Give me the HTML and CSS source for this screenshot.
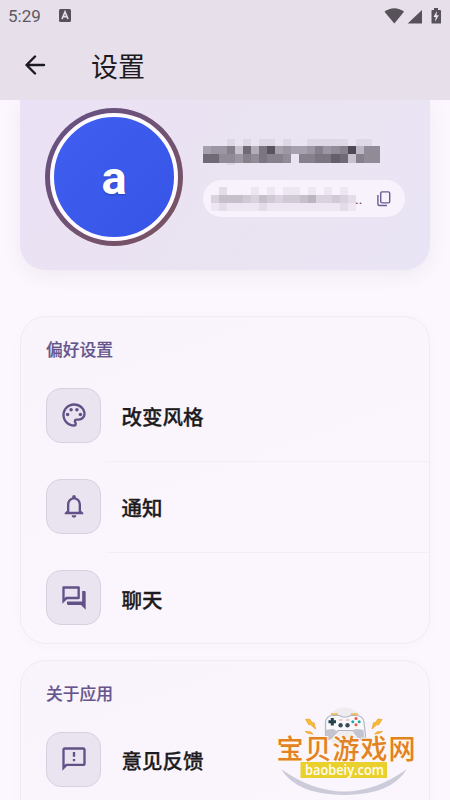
FILE: index.html
```html
<!DOCTYPE html>
<html lang="zh-CN">
<head>
<meta charset="utf-8">
<title>设置</title>
<link rel="stylesheet" href="styles.css">
</head>
<body>
<div class="screen">
  <header class="header">
    <div class="status">
      <span class="clock">5:29</span>
      <svg class="badge" width="12" height="13" viewBox="0 0 12 13"><rect width="12" height="13" rx="1.5" fill="#57525a"/><path d="M3 10 6 2.8 9 10M4.2 7.6h3.6" fill="none" stroke="#e7e0eb" stroke-width="1.6"/></svg>
      <svg class="signals" width="58" height="18" viewBox="0 0 58 18"><g fill="#57525a"><path d="M.5 4.8C6-.1 14.500-.1 20 4.800L10.300 16.500z"/><path d="M38 3v13.500H23.700z"/><path d="M48 3h2V1h4v2h2q1 0 1 1v12q0 .5-.5.500h-8.500q-.5 0-.5-.5V4q0-1 .5-1z"/></g><path d="m52.800 4-3.300 6h2.200l-.7 4.800 3.800-6.500h-2.300z" fill="#eee7f1"/></svg>
    </div>
    <div class="bar">
      <svg width="22" height="22" viewBox="0 0 22 22" fill="none" stroke="#1c1a20" stroke-width="2.400" stroke-linecap="round" stroke-linejoin="round"><path d="M19 10H2M10 1.500 1.500 10l8.500 8.500"/></svg>
      <h1>设置</h1>
    </div>
  </header>

  <main>
    <section class="profile">
      <div class="ring"><div class="avatar">a</div></div>
      <div class="who">
        <svg id="name" class="name" width="178" height="26" shape-rendering="crispEdges"></svg>
        <div class="pill">
          <svg id="account" class="account" width="146" height="24" shape-rendering="crispEdges"></svg>
          <span class="dots">..</span>
          <svg width="14" height="16" viewBox="0 0 14 16" fill="none" stroke="#6c5d91" stroke-width="1.400"><rect x="3.700" y=".9" width="9" height="11" rx="1.400"/><path d="M.9 4v9q0 1.500 1.500 1.500H10"/></svg>
        </div>
      </div>
    </section>

    <section class="card">
      <h2>偏好设置</h2>
      <div class="item">
        <div class="tile"><svg viewBox="0 0 24 24"><path d="M12 22C6.490 22 2 17.510 2 12S6.490 2 12 2s10 4.040 10 9c0 3.310-2.690 6-6 6h-1.770c-.28 0-.5.22-.5.5 0 .12.050.23.130.33.410.47.640 1.060.640 1.670A2.500 2.500 0 0 1 12 22zm0-18c-4.410 0-8 3.590-8 8s3.590 8 8 8c.28 0 .5-.22.5-.5a.54.54 0 0 0-.14-.35c-.41-.46-.63-1.050-.63-1.650a2.500 2.500 0 0 1 2.500-2.500H16c2.210 0 4-1.790 4-4 0-3.860-3.590-7-8-7z"/><circle cx="6.500" cy="11.500" r="1.500"/><circle cx="9.500" cy="7.500" r="1.500"/><circle cx="14.500" cy="7.500" r="1.500"/><circle cx="17.500" cy="11.500" r="1.500"/></svg></div>
        <span>改变风格</span>
      </div>
      <div class="item">
        <div class="tile"><svg viewBox="0 0 24 24"><path d="M12 22c1.100 0 2-.9 2-2h-4c0 1.100.89 2 2 2zm6-6v-5c0-3.070-1.630-5.640-4.500-6.320V4c0-.83-.67-1.500-1.500-1.500s-1.500.67-1.500 1.500v.68C7.640 5.360 6 7.920 6 11v5l-2 2v1h16v-1l-2-2zm-2 1H8v-6c0-2.480 1.510-4.500 4-4.500s4 2.020 4 4.500v6z"/></svg></div>
        <span>通知</span>
      </div>
      <div class="item">
        <div class="tile"><svg viewBox="0 0 24 24"><path d="M15 4v7H5.170L4 12.170V4h11m1-2H3c-.55 0-1 .45-1 1v14l4-4h10c.55 0 1-.45 1-1V3c0-.55-.45-1-1-1zm5 4h-2v9H6v2c0 .55.45 1 1 1h11l4 4V7c0-.55-.45-1-1-1z"/></svg></div>
        <span>聊天</span>
      </div>
    </section>

    <section class="card">
      <h2>关于应用</h2>
      <div class="item">
        <div class="tile"><svg viewBox="0 0 24 24"><path d="M20 2H4c-1.100 0-1.990.9-1.990 2L2 22l4-4h14c1.100 0 2-.9 2-2V4c0-1.100-.9-2-2-2zm0 14H5.170l-.59.59-.58.58V4h16v12zm-9-4h2v2h-2zm0-6h2v4h-2z"/></svg></div>
        <span>意见反馈</span>
      </div>
    </section>
  </main>

  <svg class="watermark" width="160" height="100" viewBox="0 0 160 100">
    <circle cx="79.500" cy="27" r="19.500" fill="#eeecef"/>
    <path d="M16 69Q79.500 114 142 69Q126 95 79.500 95Q32 95 16 69z" fill="#cbcbd9"/>
    <path d="M66 14.500h7M86 14.500h7" stroke="#f0bd55" stroke-width="2.500"/>
    <path d="M60.500 22q1-6.500 8-6.500h6l3 1.500h5l3-1.500h5q7.500 0 8.500 6.500l1.500 14q-1 7-6 1l-6-6.500H73L67 37q-6 6-6.500-1z" fill="#f8f7fa" stroke="#b4b4c4" stroke-width="1.200"/>
    <path d="M60.500 30q5-1 8-1l3 2-7 8.500q-5 2-4-5zM98.500 30q-5-1-8-1l-3 2 6.500 8.500q5 2 5-4z" fill="#c4c4d1"/>
    <path d="M67.300 18v7.500M63.500 21.700H71" stroke="#22404d" stroke-width="3"/>
    <circle cx="75.600" cy="25.200" r="2.200" fill="#344c5b"/><circle cx="82.500" cy="25.200" r="2.200" fill="#344c5b"/>
    <path d="M74 20h3.500M81 20h3.500" stroke="#d8a49e" stroke-width="1"/>
    <circle cx="91" cy="18.500" r="1.500" fill="#e9564e"/><circle cx="91" cy="24.800" r="1.500" fill="#e9564e"/><circle cx="87.800" cy="21.700" r="1.500" fill="#25a8a4"/><circle cx="94.200" cy="21.700" r="1.500" fill="#25a8a4"/>
    <path d="m40.500 19.500 4-.5 3 4 1.500-.5 1.500 6.500-5-4.500-1.500.5zM40 31.500l5.500.2 2.500 2.500-5-1zM117 19.500l-4-.5-3 4-1.500-.5-1.500 6.500 5-4.500 1.500.5zM117.500 31.500l-5.500.2-2.500 2.500 5-1z" fill="#f6bd31" stroke="#ed9c2c" stroke-width=".7"/>
    <text class="site" x="11.500" y="58.500">宝贝游戏网</text>
    <rect x="35.500" y="62" width="86.500" height="16" fill="#e9d02c"/>
    <text class="url" x="40" y="74.500" textLength="79" lengthAdjust="spacingAndGlyphs">baobeiy.com</text>
  </svg>
</div>
<script src="mosaic.js"></script>
</body>
</html>
```

FILE: styles.css
```css
* { box-sizing: border-box; }
body { margin: 0; font-family: Roboto, "Noto Sans CJK SC", sans-serif; }
.screen { position: relative; width: 450px; height: 800px; overflow: hidden; background: #fcf7fe; }
.header { position: relative; z-index: 1; height: 100px; background: #e7e0eb; }
.status { display: flex; align-items: center; height: 31px; padding: 0 8px; }
.clock { width: 51px; font-size: 17px; line-height: 30px; color: #5d5861; }
.signals { margin-left: auto; }
.bar { display: flex; align-items: center; gap: 44px; height: 69px; padding-left: 25px; }
h1 { margin: 0; font: 400 27px/40px "Noto Sans CJK SC", sans-serif; color: #1c1a20; }
main { padding: 0 20px; }
.profile { display: flex; height: 170px; padding: 8px 25px 0 25px; gap: 20px; border-radius: 0 0 25px 25px; background: linear-gradient(120deg, #ebe1f6, #eae3f1 50%, #e9e4f5); box-shadow: 0 5px 20px rgba(75, 50, 90, .07); }
.ring { flex: none; width: 138px; height: 138px; padding: 5px; border-radius: 50%; background: linear-gradient(135deg, #655286, #7c5260); }
.avatar { height: 128px; border: 4px solid #fefaff; border-radius: 50%; background: linear-gradient(135deg, #405ff0, #3654e5); color: #fff; font-size: 47px; font-weight: 700; line-height: 122px; text-align: center; text-shadow: 0 1px 2px rgba(20, 30, 90, .35); }
.who { display: flex; flex-direction: column; padding-top: 31px; }
.name { display: block; margin-bottom: 15px; }
.pill { display: flex; align-items: center; width: 202px; height: 37px; padding: 0 14px 0 8px; border-radius: 19px; background: #f8f2fd; }
.account { flex: none; }
.dots { width: 20px; margin-left: -2px; margin-right: 2px; font-size: 14px; line-height: 20px; color: #4d4754; }
.card { margin-top: 46px; height: 328px; padding: 23px 0 0 25px; border: 1px solid #f0eaf3; border-radius: 26px; background: linear-gradient(160deg, #f9f4fb, #fbf6fe 65%); box-shadow: 0 2px 15px rgba(80, 50, 100, .02); }
.card + .card { margin-top: 16px; }
h2 { margin: 0; font: 500 16.800px/18px "Noto Sans CJK SC", sans-serif; color: #66558d; -webkit-text-stroke: .2px #66558d; }
.item { position: relative; display: flex; align-items: center; gap: 20.500px; height: 91.300px; font: 500 20.500px/30px "Noto Sans CJK SC", sans-serif; color: #1d1a20; -webkit-text-stroke: .3px #1d1a20; }
.item span { padding-top: 2px; }
h2 + .item { margin-top: 11.500px; }
.item + .item::before { content: ""; position: absolute; top: 0; right: 0; left: 60px; height: 1px; background: #f3edf6; }
.tile { display: grid; place-items: center; width: 55px; height: 55px; border: 1px solid #d8d0e1; border-radius: 15px; background: #eae4f0; }
.tile svg { width: 28px; height: 28px; fill: #625187; }
.watermark { position: absolute; left: 265px; top: 700px; }
.site { font: 500 27px "Noto Sans CJK SC", sans-serif; letter-spacing: 1px; fill: #e28222; stroke: #fff7ee; stroke-width: 2px; paint-order: stroke; }
.url { font: 600 14.500px "Open Sans", sans-serif; fill: #fffdf0; }
```

FILE: mosaic.js
```js
// Each hex digit is the opacity of one censored cell; "0" is empty.
function mosaic(id, rows, heights, color, cell) {
  const svg = document.getElementById(id);
  let y = 0;
  rows.forEach((row, r) => {
    [...row].forEach((digit, c) => {
      const rect = document.createElementNS("http://www.w3.org/2000/svg", "rect");
      rect.setAttribute("x", c * cell);
      rect.setAttribute("y", y);
      rect.setAttribute("width", cell);
      rect.setAttribute("height", heights[r]);
      rect.setAttribute("fill", color);
      rect.setAttribute("fill-opacity", parseInt(digit, 16) / 15);
      svg.append(rect);
    });
    y += heights[r];
  });
}
mosaic("name", ["0001010110100111110110", "67793b5ad676679789e488", "bb88798a998099aacb3988", "0001000000000000000000"], [7, 8, 9, 2], "#423d48", 8.03);
mosaic("account", ["020001010110101010", "355543543445633432", "121111211111111121"], [8, 8, 8], "#625c67", 8.05);
```
